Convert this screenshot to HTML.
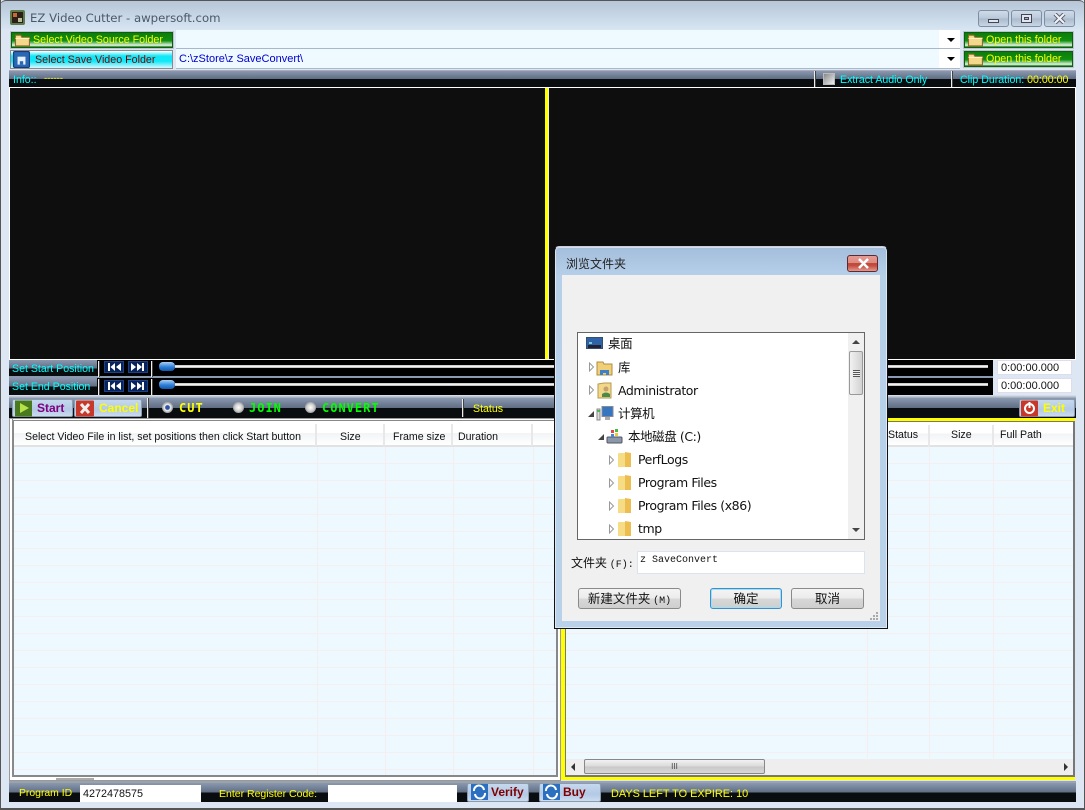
<!DOCTYPE html>
<html><head><meta charset="utf-8"><style>
html,body{margin:0;padding:0;width:1085px;height:810px;overflow:hidden;background:#dce7f3}
*{box-sizing:border-box}
body{font:10.6px "Liberation Sans","Noto Sans CJK SC",sans-serif;position:relative}
.a{position:absolute;white-space:nowrap}
.bar{position:absolute;background:linear-gradient(#8a99af,#5f6d83 50%,#0a0d10 50%,#0a0d10)}
.gb{position:absolute;background:linear-gradient(#0c7d0c,#109010 55%,#e8f5e8 88%,#0c7d0c);border:1px solid #0d5f0d;outline:1px solid #b9c4cf;color:#ff0;font-size:10.7px;line-height:16px;white-space:nowrap}
.gb svg,.cb svg{position:absolute;left:2px;top:0}
.cb{position:absolute;background:linear-gradient(#ffffff,#10e8f8 30%,#10e8f8 60%,#d8f8ff);outline:1px solid #8a8a8a;color:#800000;font-size:10.7px;white-space:nowrap}
.combo{position:absolute;left:176px;width:784px;background:#fff;border-bottom:1px solid #a9b8c8}
.combo i{position:absolute;left:0;top:0;bottom:0;width:763px;background:#eefaff}
.tri{position:absolute;left:771px;width:0;height:0;border-left:4px solid transparent;border-right:4px solid transparent;border-top:4px solid #000}
.wb{position:absolute;top:10px;width:31px;height:17px;border:1px solid #7f8ea2;border-radius:3px;background:linear-gradient(#cfdbe8,#b9c8d9 50%,#a9bacd 50%,#c8d6e4)}
.lab{position:absolute;color:#0ff;font-size:10.6px;white-space:nowrap}
.y{color:#ff0}
.sep{position:absolute;width:2px;border-left:1px solid #eee;border-right:1px solid #444}
.nav{position:absolute;width:20px;height:12px;background:#08245a;border:1px solid #1c3f85}
.nav svg{position:absolute;left:1px;top:0}
.track{position:absolute;height:3px;background:linear-gradient(#bbb,#fff 50%,#aaa);border:0}
.thumb{position:absolute;width:16px;height:9px;border-radius:4px;background:linear-gradient(#a9d1f5,#2f7fd8 55%,#1257ab)}
.tbtn{position:absolute;background:linear-gradient(#c5d8ee,#b3c9e5 60%,#cbdcf0);border:1px solid #8b9bb0;border-radius:2px;font:bold 12px/17px "Liberation Sans",sans-serif;white-space:nowrap}
.radio{position:absolute;width:11px;height:11px;border-radius:50%;background:radial-gradient(#fff,#ccc 60%,#999);border:1px solid #aaa}
.rl{position:absolute;font:bold 12px/14px "DejaVu Sans Mono","Liberation Mono",monospace;letter-spacing:1px}
.list{position:absolute;background-color:#eef9ff;border:1px solid #7f7f7f;overflow:hidden}
.rows{position:absolute;left:0;right:0;background:repeating-linear-gradient(#eef9ff 0,#eef9ff 16px,#f6efef 16px,#f6efef 17px)}
.vl{position:absolute;width:1px;background:#f5eeee}
.hd{position:absolute;left:0;right:0;top:0;background:linear-gradient(#fff 50%,#f1f3f5 50%,#fff);border-bottom:2px solid #e2e2e2}
.hs{position:absolute;top:3px;height:22px;width:2px;background:#e8e8e8}
.ht{position:absolute;font-size:10.6px;color:#111;white-space:nowrap}
.dt{position:absolute;font:12.5px "DejaVu Sans","Noto Sans CJK SC",sans-serif;color:#111;white-space:nowrap;line-height:16px;letter-spacing:-.42px}
.ex2{position:absolute;width:0;height:0;border-left:6px solid transparent;border-bottom:6px solid #444}
.dbtn{position:absolute;height:21px;border:1px solid #8a8a8a;border-radius:3px;background:linear-gradient(#f4f4f4,#ebebeb 50%,#d8d8d8 50%,#cfcfcf);font:12.5px/18px "Noto Sans CJK SC",sans-serif;text-align:center;color:#111}
</style></head><body>
<!-- window frame -->
<div class="a" style="left:0;top:0;width:1085px;height:30px;background:linear-gradient(#b6c6d8,#d8e6f3);border-top:1px solid #555;border-radius:6px 6px 0 0"></div>
<div class="a" style="left:0;top:0;width:1px;height:810px;background:#555"></div>
<div class="a" style="right:0;top:0;width:1px;height:810px;background:#555"></div>
<div class="a" style="left:0;top:808px;width:1085px;height:2px;background:#555"></div>
<svg class="a" style="left:10px;top:10px" width="16" height="16"><rect width="15" height="15" rx="2" fill="#5c7a4c"/><rect x="2" y="2" width="11" height="11" fill="#2a2018"/><rect x="3" y="3" width="4" height="4" fill="#c63"/><rect x="8" y="8" width="4" height="4" fill="#bb9"/></svg>
<div class="a" style="left:30px;top:10px;font:11.7px/17px 'DejaVu Sans',sans-serif;color:#4a5868">EZ Video Cutter - awpersoft.com</div>
<div class="wb" style="left:978px"><div class="a" style="left:9px;top:8px;width:11px;height:4px;background:#dfe6ee;border:1px solid #445"></div></div>
<div class="wb" style="left:1011px"><div class="a" style="left:9px;top:3px;width:11px;height:9px;background:#dfe6ee;border:1px solid #445"></div><div class="a" style="left:12px;top:6px;width:5px;height:3px;background:#9fb0c3;border:1px solid #445"></div></div>
<div class="wb" style="left:1044px"><svg class="a" style="left:8px;top:2px" width="13" height="11"><path d="M2 1l9 9M11 1l-9 9" stroke="#556" stroke-width="4"/><path d="M2 1l9 9M11 1l-9 9" stroke="#eef2f6" stroke-width="2.2"/></svg></div>

<!-- folder rows -->
<div class="gb" style="left:11px;top:32px;width:162px;height:16px;line-height:15px;padding-left:21px"><svg width="18" height="15" viewBox="0 0 16 14" style="top:-1px"><path d="M1 3h5l1 2h7v8H1z" fill="#f3d98c" stroke="#94682a"/><path d="M1 6h13" stroke="#fff2c4"/></svg>Select Video Source Folder</div>
<div class="cb" style="left:11px;top:51px;width:161px;height:17px;line-height:18px;padding-left:24px"><svg width="17" height="17" viewBox="0 0 15 15"><rect x=".5" y=".5" width="14" height="14" rx="1" fill="#2a67b5" stroke="#153c78"/><rect x="4" y="5" width="7" height="7" fill="#e6f0fa"/><rect x="6" y="9" width="3" height="3" fill="#2a67b5"/></svg>Select Save Video Folder</div>
<div class="combo" style="top:30px;height:19px"><i></i><div class="tri" style="top:8px"></div></div>
<div class="combo" style="top:49px;height:20px"><i></i><div class="a" style="left:3px;top:4px;color:#0000d0;font-size:11px;z-index:1">C:\zStore\z SaveConvert\</div><div class="tri" style="top:8px"></div></div>
<div class="gb" style="left:964px;top:32px;width:109px;height:16px;line-height:15px;padding-left:21px"><svg width="18" height="15" viewBox="0 0 16 14" style="top:-1px"><path d="M1 3h5l1 2h7v8H1z" fill="#f3d98c" stroke="#94682a"/><path d="M1 6h13" stroke="#fff2c4"/></svg>Open this folder</div>
<div class="gb" style="left:964px;top:51px;width:109px;height:16px;line-height:15px;padding-left:21px"><svg width="18" height="15" viewBox="0 0 16 14" style="top:-1px"><path d="M1 3h5l1 2h7v8H1z" fill="#f3d98c" stroke="#94682a"/><path d="M1 6h13" stroke="#fff2c4"/></svg>Open this folder</div>

<!-- info bar -->
<div class="a" style="left:9px;top:70px;width:1067px;height:1px;background:#aab"></div>
<div class="bar" style="left:9px;top:71px;width:1067px;height:16px"></div>
<div class="lab" style="left:13px;top:74px">Info::</div>
<div class="a y" style="left:44px;top:73px;font-size:9.5px">------</div>
<div class="sep" style="left:814px;top:71px;height:16px"></div>
<div class="a" style="left:823px;top:73px;width:12px;height:12px;background:linear-gradient(135deg,#888,#eee);border:1px solid #bbb"></div>
<div class="lab" style="left:840px;top:74px">Extract Audio Only</div>
<div class="sep" style="left:951px;top:71px;height:16px"></div>
<div class="lab" style="left:960px;top:74px">Clip Duration: <span class="y">00:00:00</span></div>

<!-- video -->
<div class="a" style="left:9px;top:87px;width:1067px;height:273px;background:#fff"></div>
<div class="a" style="left:10px;top:88px;width:535px;height:271px;background:#0e0e0e"></div>
<div class="a" style="left:545px;top:88px;width:4px;height:271px;background:#ff0;border-right:1px solid #eed"></div>
<div class="a" style="left:549px;top:88px;width:526px;height:271px;background:#0e0e0e"></div>

<!-- position rows -->
<div class="bar" style="left:9px;top:360px;width:88px;height:17px"></div>
<div class="bar" style="left:9px;top:378px;width:88px;height:17px"></div>
<div class="a" style="left:97px;top:360px;width:896px;height:35px;background:#000"></div>
<div class="a" style="left:9px;top:376px;width:984px;height:2px;background:#8a9ab0"></div>
<div class="lab" style="left:12px;top:363px">Set Start Position</div>
<div class="lab" style="left:12px;top:381px">Set End Position</div>
<div class="sep" style="left:98px;top:361px;height:16px"></div>
<div class="sep" style="left:98px;top:379px;height:16px"></div>
<div class="sep" style="left:151px;top:361px;height:16px"></div>
<div class="sep" style="left:151px;top:379px;height:16px"></div>
<div class="nav" style="left:104px;top:361px"><svg width="16" height="10"><path d="M2 1h2v8H2zM9 1v8L4.500 5zM15 1v8l-5-4z" fill="#fff"/></svg></div>
<div class="nav" style="left:128px;top:361px"><svg width="16" height="10"><path d="M1 1v8l5-4zM7 1v8l5-4zM12 1h2v8h-2z" fill="#fff"/></svg></div>
<div class="nav" style="left:104px;top:380px"><svg width="16" height="10"><path d="M2 1h2v8H2zM9 1v8L4.500 5zM15 1v8l-5-4z" fill="#fff"/></svg></div>
<div class="nav" style="left:128px;top:380px"><svg width="16" height="10"><path d="M1 1v8l5-4zM7 1v8l5-4zM12 1h2v8h-2z" fill="#fff"/></svg></div>
<div class="track" style="left:175px;top:365px;width:813px"></div>
<div class="track" style="left:175px;top:383px;width:813px"></div>
<div class="thumb" style="left:159px;top:362px"></div>
<div class="thumb" style="left:159px;top:380px"></div>
<div class="a" style="left:997px;top:360px;width:75px;height:15px;background:#fff;border:1px solid #dde;font:11px/14px 'Liberation Sans',sans-serif;padding-left:3px;color:#111">0:00:00.000</div>
<div class="a" style="left:997px;top:378px;width:75px;height:15px;background:#fff;border:1px solid #dde;font:11px/14px 'Liberation Sans',sans-serif;padding-left:3px;color:#111">0:00:00.000</div>

<!-- toolbar -->
<div class="a" style="left:9px;top:395px;width:1067px;height:3px;background:linear-gradient(#dfe6ef,#9aa7b7)"></div>
<div class="bar" style="left:9px;top:398px;width:1067px;height:20px"></div>
<div class="tbtn" style="left:12px;top:399px;width:61px;height:18px;color:#800080;padding-left:24px"><svg class="a" style="left:2px;top:0" width="19" height="17"><rect width="17" height="16" y=".5" fill="#4a7a1e"/><path d="M5 3l9 5-9 5z" fill="#b6e34a"/></svg>Start</div>
<div class="tbtn" style="left:74px;top:399px;width:68px;height:18px;color:#ff0;padding-left:24px"><svg class="a" style="left:1px;top:0" width="19" height="17"><rect width="18" height="16" y=".5" rx="1" fill="#c8382a"/><path d="M5 4l8 9M13 4l-8 9" stroke="#eee" stroke-width="3"/></svg>Cancel</div>
<div class="sep" style="left:147px;top:398px;height:20px"></div>
<div class="radio" style="left:162px;top:402px;background:radial-gradient(#2a55a8 30%,#eee 45%,#999)"></div>
<div class="rl y" style="left:179px;top:401px">CUT</div>
<div class="radio" style="left:233px;top:402px"></div>
<div class="rl" style="left:249px;top:401px;color:#0f0">JOIN</div>
<div class="radio" style="left:305px;top:402px"></div>
<div class="rl" style="left:322px;top:401px;color:#0f0">CONVERT</div>
<div class="sep" style="left:462px;top:399px;height:18px"></div>
<div class="a y" style="left:473px;top:403px">Status</div>
<div class="tbtn" style="left:1019px;top:399px;width:56px;height:18px;color:#ff0;padding-left:23px"><svg class="a" style="left:1px;top:0" width="19" height="17"><rect width="17" height="16" y=".5" rx="1" fill="#c8382a"/><circle cx="8.500" cy="8.500" r="4.500" fill="none" stroke="#fff" stroke-width="2"/><path d="M8.500 2v6" stroke="#fff" stroke-width="2"/></svg>Exit</div>

<!-- left list -->
<div class="a" style="left:9px;top:418px;width:552px;height:363px;background:#fff;border:1px solid #999"></div>
<div class="a" style="left:10px;top:419px;width:3px;height:358px;background:#fff;border-right:1px solid #8a8a8a"></div>
<div class="list" style="left:13px;top:420px;width:545px;height:357px;border-width:1px 2px 2px 1px;border-color:#888">
 <div class="hd" style="height:26px"></div><div class="rows" style="top:26px;bottom:0"></div>
 <div class="vl" style="left:303px;top:26px;bottom:0"></div><div class="vl" style="left:371px;top:26px;bottom:0"></div><div class="vl" style="left:439px;top:26px;bottom:0"></div><div class="vl" style="left:519px;top:26px;bottom:0"></div>
 <div class="hs" style="left:301px"></div><div class="hs" style="left:369px"></div><div class="hs" style="left:437px"></div><div class="hs" style="left:517px"></div>
 <div class="ht" style="left:11px;top:10px">Select Video File in list, set positions then click Start button</div>
 <div class="ht" style="left:326px;top:10px">Size</div><div class="ht" style="left:379px;top:10px">Frame size</div><div class="ht" style="left:444px;top:10px">Duration</div>
</div>
<div class="a" style="left:56px;top:778px;width:38px;height:2px;background:#aaa"></div>

<!-- right list -->
<div class="a" style="left:561px;top:418px;width:514px;height:362px;background:#ff0"></div>
<div class="a" style="left:9px;top:781px;width:1067px;height:2px;background:#9aa3ad"></div>
<div class="list" style="left:565px;top:421px;width:510px;height:356px;border-width:1px 2px 2px 1px;border-color:#777">
 <div class="hd" style="height:25px"></div><div class="rows" style="top:25px;bottom:17px"></div>
 <div class="vl" style="left:301px;top:25px;bottom:17px"></div><div class="vl" style="left:363px;top:25px;bottom:17px"></div><div class="vl" style="left:427px;top:25px;bottom:17px"></div>
 <div class="hs" style="left:362px"></div><div class="hs" style="left:426px"></div>
 <div class="ht" style="left:322px;top:7px">Status</div><div class="ht" style="left:385px;top:7px">Size</div><div class="ht" style="left:434px;top:7px">Full Path</div>
 <div class="a" style="left:0;right:0;bottom:0;height:16px;background:#eee"></div>
 <div class="a" style="left:18px;bottom:1px;width:181px;height:15px;background:linear-gradient(#f2f2f2,#d9d9d9 50%,#c8c8c8 50%,#d8d8d8);border:1px solid #888;border-radius:2px;text-align:center;font:8px/13px 'Liberation Sans',sans-serif;color:#444">III</div>
 <div class="a" style="left:5px;bottom:4px;border-top:4px solid transparent;border-bottom:4px solid transparent;border-right:4px solid #333"></div>
 <div class="a" style="right:5px;bottom:4px;border-top:4px solid transparent;border-bottom:4px solid transparent;border-left:4px solid #333"></div>
</div>

<!-- bottom bar -->
<div class="bar" style="left:9px;top:783px;width:1067px;height:19px"></div>
<div class="a y" style="left:19px;top:788px;font-size:10.4px">Program ID</div>
<div class="a" style="left:80px;top:785px;width:121px;height:17px;background:#fff;font-size:10.8px;line-height:18px;padding-left:3px;color:#111">4272478575</div>
<div class="a y" style="left:219px;top:788px;font-size:10.5px">Enter Register Code:</div>
<div class="a" style="left:328px;top:785px;width:129px;height:17px;background:#fff"></div>
<div class="tbtn" style="left:467px;top:783px;width:62px;height:19px;line-height:16px;color:#800000;padding-left:23px"><svg class="a" style="left:3px;top:0" width="18" height="17"><rect width="17" height="16" fill="#2a6fc0"/><path d="M3 7a5 5 0 0 1 10-1M14 9a5 5 0 0 1-10 1" fill="none" stroke="#fff" stroke-width="2"/></svg>Verify</div>
<div class="tbtn" style="left:539px;top:783px;width:62px;height:19px;line-height:16px;color:#800000;padding-left:23px"><svg class="a" style="left:3px;top:0" width="18" height="17"><rect width="17" height="16" fill="#2a6fc0"/><path d="M3 7a5 5 0 0 1 10-1M14 9a5 5 0 0 1-10 1" fill="none" stroke="#fff" stroke-width="2"/></svg>Buy</div>
<div class="a y" style="left:611px;top:788px;font-size:10.9px">DAYS LEFT TO EXPIRE: 10</div>

<!-- dialog -->
<div class="a" style="left:554px;top:246px;width:334px;height:383px;background:linear-gradient(#a3bedb 0,#b7d0ea 30px,#b9d2ea);border:1px solid #111;border-top-color:#ccd;border-radius:5px 5px 0 0;box-shadow:inset 0 0 0 1px rgba(255,255,255,.5)"></div>
<div class="a" style="left:566px;top:256px;font:12px/16px 'Noto Sans CJK SC',sans-serif;color:#222">浏览文件夹</div>
<div class="a" style="left:847px;top:255px;width:31px;height:17px;border:1px solid #5c2a30;border-radius:3px;background:linear-gradient(#e59a92,#dd8b82 48%,#c24a3a 48%,#c24a3a 62%,#e29a90)"><svg class="a" style="left:9px;top:2px" width="13" height="11"><path d="M2 1l9 9M11 1l-9 9" stroke="#fff" stroke-width="2.500"/></svg></div>
<div class="a" style="left:562px;top:275px;width:318px;height:346px;background:#f0f0f0"></div>
<div class="a" style="left:577px;top:332px;width:288px;height:208px;background:#fff;border:1px solid #666"></div>
<div class="a" style="left:848px;top:333px;width:16px;height:206px;background:#f0f0f0"></div>
<div class="a" style="left:849px;top:351px;width:14px;height:44px;background:linear-gradient(90deg,#f2f2f2,#d2d2d2);border:1px solid #999;border-radius:2px"><div class="a" style="left:3px;top:18px;width:7px;height:7px;background:repeating-linear-gradient(#555 0,#555 1px,#eee 1px,#eee 2px)"></div></div>
<div class="a" style="left:852px;top:340px;border-left:4px solid transparent;border-right:4px solid transparent;border-bottom:4px solid #444"></div>
<div class="a" style="left:852px;top:528px;border-left:4px solid transparent;border-right:4px solid transparent;border-top:4px solid #444"></div>

<svg class="a" style="left:586px;top:336px" width="18" height="16"><rect x=".5" y="1.500" width="16" height="11" fill="#2e63a8" stroke="#33506f"/><rect x="2" y="9" width="13" height="3" fill="#223"/><rect x="3" y="6" width="3" height="2" fill="#7cd"/></svg>
<div class="dt" style="left:608px;top:336px">桌面</div>

<svg class="a" style="left:588px;top:362px" width="8" height="10"><path d="M1.500 1l4 4-4 4z" fill="#fff" stroke="#999"/></svg>
<svg class="a" style="left:596px;top:360px" width="18" height="16"><path d="M1 2h6l1 2h8v11H1z" fill="#f0cf78" stroke="#b08c40"/><path d="M4 15v-5h9v5h-3v-2H7v2z" fill="#3b80c8"/></svg>
<div class="dt" style="left:618px;top:360px">库</div>

<svg class="a" style="left:588px;top:385px" width="8" height="10"><path d="M1.500 1l4 4-4 4z" fill="#fff" stroke="#999"/></svg>
<svg class="a" style="left:597px;top:382px" width="16" height="17"><path d="M1 2l6-1h7v15H1z" fill="#f2d889" stroke="#b59a50"/><circle cx="9" cy="7" r="2.500" fill="#c8a070"/><path d="M5 15v-3q4-3 8 0v3z" fill="#4a8a4a"/></svg>
<div class="dt" style="left:618px;top:383px">Administrator</div>

<div class="ex2" style="left:588px;top:411px"></div>
<svg class="a" style="left:596px;top:405px" width="18" height="17"><rect x="6" y="1.500" width="11" height="10" fill="#3676c0" stroke="#889"/><rect x="9" y="12" width="5" height="3" fill="#aaa"/><rect x="1" y="4" width="3" height="11" fill="#ddd" stroke="#888"/><rect x="1.500" y="5" width="2" height="2" fill="#3c3"/></svg>
<div class="dt" style="left:618px;top:406px">计算机</div>

<div class="ex2" style="left:598px;top:434px"></div>
<svg class="a" style="left:606px;top:428px" width="18" height="17"><rect x="1" y="9" width="15" height="6" rx="1" fill="#8a98a8" stroke="#556"/><rect x="5" y="2" width="3" height="3" fill="#e44"/><rect x="9" y="1" width="3" height="3" fill="#4b4"/><rect x="5" y="6" width="3" height="3" fill="#48d"/><rect x="9" y="5" width="3" height="3" fill="#ec3"/></svg>
<div class="dt" style="left:628px;top:429px">本地磁盘 (C:)</div>

<svg class="a" style="left:608px;top:455px" width="8" height="10"><path d="M1.500 1l4 4-4 4z" fill="#fff" stroke="#999"/></svg>
<svg class="a" style="left:616px;top:451px" width="17" height="17"><path d="M2 3q0-1 1-1h11q1 0 1 1v13H2z" fill="#f7dc86"/><path d="M9 1l6 1v14H9z" fill="#ecbe52"/></svg>
<div class="dt" style="left:638px;top:452px">PerfLogs</div>

<svg class="a" style="left:608px;top:478px" width="8" height="10"><path d="M1.500 1l4 4-4 4z" fill="#fff" stroke="#999"/></svg>
<svg class="a" style="left:616px;top:474px" width="17" height="17"><path d="M2 3q0-1 1-1h11q1 0 1 1v13H2z" fill="#f7dc86"/><path d="M9 1l6 1v14H9z" fill="#ecbe52"/></svg>
<div class="dt" style="left:638px;top:475px">Program Files</div>

<svg class="a" style="left:608px;top:501px" width="8" height="10"><path d="M1.500 1l4 4-4 4z" fill="#fff" stroke="#999"/></svg>
<svg class="a" style="left:616px;top:497px" width="17" height="17"><path d="M2 3q0-1 1-1h11q1 0 1 1v13H2z" fill="#f7dc86"/><path d="M9 1l6 1v14H9z" fill="#ecbe52"/></svg>
<div class="dt" style="left:638px;top:498px">Program Files (x86)</div>

<svg class="a" style="left:608px;top:524px" width="8" height="10"><path d="M1.500 1l4 4-4 4z" fill="#fff" stroke="#999"/></svg>
<svg class="a" style="left:616px;top:520px" width="17" height="17"><path d="M2 3q0-1 1-1h11q1 0 1 1v13H2z" fill="#f7dc86"/><path d="M9 1l6 1v14H9z" fill="#ecbe52"/></svg>
<div class="dt" style="left:638px;top:521px">tmp</div>

<div class="a" style="left:571px;top:555px;font:12px/16px 'Noto Sans CJK SC',sans-serif;color:#111">文件夹 <span style="font:10px 'Liberation Mono',monospace">(F):</span></div>
<div class="a" style="left:637px;top:551px;width:228px;height:23px;background:#fff;border:1px solid #dbe3ee;font:10px/18px 'Liberation Mono',monospace;padding-left:2px;color:#111">z SaveConvert</div>
<div class="dbtn" style="left:578px;top:588px;width:103px">新建文件夹 <span style="font:10px 'Liberation Mono',monospace">(M)</span></div>
<div class="dbtn" style="left:710px;top:588px;width:72px;border-color:#3c8fc8;box-shadow:inset 0 0 0 1px #9fe0f5">确定</div>
<div class="dbtn" style="left:791px;top:588px;width:73px">取消</div>
<svg class="a" style="left:869px;top:611px" width="10" height="10"><g fill="#aaa"><rect x="7" y="1" width="2" height="2"/><rect x="4" y="4" width="2" height="2"/><rect x="7" y="4" width="2" height="2"/><rect x="1" y="7" width="2" height="2"/><rect x="4" y="7" width="2" height="2"/><rect x="7" y="7" width="2" height="2"/></g></svg>
</body></html>
